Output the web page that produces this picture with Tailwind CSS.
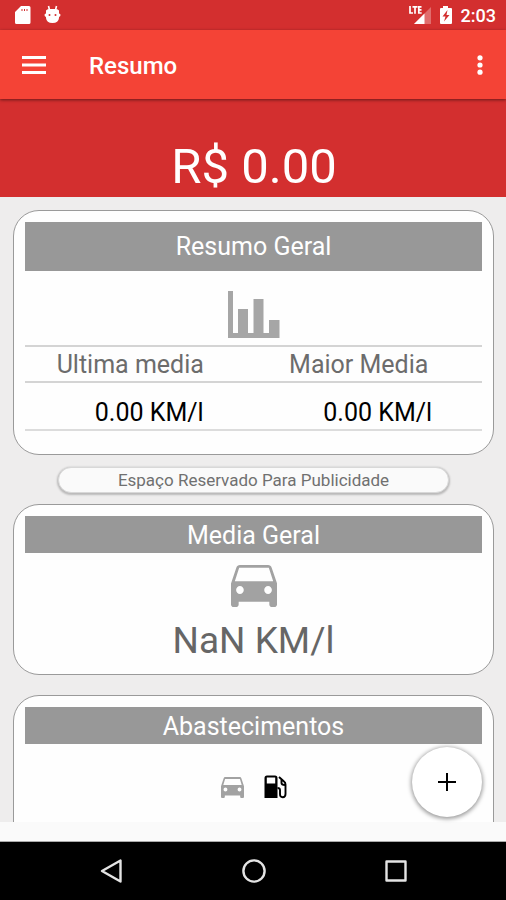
<!DOCTYPE html>
<html lang="pt-BR">
<head>
<meta charset="utf-8">
<meta name="viewport" content="width=device-width, initial-scale=1">
<title>Resumo</title>
<script src="https://cdn.jsdelivr.net/npm/@tailwindcss/browser@4"></script>
</head>
<body class="flex h-screen flex-col overflow-hidden bg-[#fafafa] font-[Roboto,sans-serif] text-black">

<!-- Status bar -->
<div class="flex h-[30px] shrink-0 items-center justify-between bg-[#d32f2f] pr-[10px] pl-[14px] text-white">
  <div class="flex items-center gap-[13px]">
    <svg class="h-5 w-[17px]" viewBox="0 0 17 20" fill="currentColor" aria-hidden="true"><path fill-rule="evenodd" d="M7 1h8a1.500 1.500 0 0 1 1.500 1.500v15a1.500 1.500 0 0 1-1.500 1.500H2.500A1.500 1.500 0 0 1 1 17.500V7zM7.500 4V6H8.500V4zM10 4V6h1V4zM12.500 4V6h1V4z"/></svg>
    <svg class="h-5 w-[17px]" viewBox="0 0 17 20" aria-hidden="true"><path d="M4.500 1l1 4M12.500 1l-1 4" stroke="currentColor" stroke-width="1.600"/><path fill="currentColor" fill-rule="evenodd" d="M2 5.500Q3 4 5 4h7q2 0 3 1.500v3q1.500 0 1.500 1.500T15 12v1q-.5 5-6.500 5T2 13v-1Q.5 11.500.5 10T2 8.500zM5.500 9a1 1 0 1 0 0 2 1 1 0 0 0 0-2zM11.500 9a1 1 0 1 0 0 2 1 1 0 0 0 0-2z"/></svg>
  </div>
  <div class="flex items-center">
    <svg class="mr-2 h-[22px] w-6" viewBox="0 0 24 22" aria-hidden="true"><path d="M24 3v17H7z" fill="#fff" fill-opacity=".3"/><path d="M17.500 9.500V20H7z" fill="#fff"/><path d="M3 2v7h3M5.500 2.800h5M8 2.800V9.800M14.500 2.800h-2.700V9h2.900M12 5.900h2.500" fill="none" stroke="#fff" stroke-width="1.700"/></svg>
    <svg class="mr-2 h-5 w-[14px]" viewBox="0 0 14 20" fill="currentColor" aria-hidden="true"><path fill-rule="evenodd" d="M4 1h5v2h3a1 1 0 0 1 1 1v14a1 1 0 0 1-1 1H2a1 1 0 0 1-1-1V4a1 1 0 0 1 1-1h2zM8.500 5L3.500 11.500H6.500L5 16.500l5.500-6.500H7.500z"/></svg>
    <span class="pt-px text-lg leading-5 font-medium">2:03</span>
  </div>
</div>

<!-- App bar -->
<header class="relative flex h-[69px] shrink-0 items-center bg-[#f44336] px-[14px] text-white shadow-[0_1px_3px_rgba(0,0,0,0.5)]">
  <button type="button" aria-label="Menu" class="flex size-10 items-center justify-center"><svg class="h-[18px] w-6" viewBox="0 0 24 18" fill="currentColor"><path d="M0 0h24v3H0zM0 7.500h24v3H0zM0 15h24v3H0z"/></svg></button>
  <h1 class="ml-[35px] grow pt-[2px] text-2xl font-medium">Resumo</h1>
  <button type="button" aria-label="Mais opções" class="flex h-10 w-6 items-center justify-center"><svg class="h-5 w-[6px]" viewBox="0 0 6 20" fill="currentColor"><circle cx="3" cy="2.800" r="2.600"/><circle cx="3" cy="10" r="2.600"/><circle cx="3" cy="17.200" r="2.600"/></svg></button>
</header>

<section class="flex h-[98px] shrink-0 items-end justify-center bg-[#d32f2f] pb-[2px] pl-[2px] text-[49px] leading-[56px] text-white">R$ 0.00</section>

<!-- Content -->
<main class="flex min-h-0 grow flex-col overflow-hidden bg-[#eeeded] pt-[13px] pr-3 pl-[13px] *:shrink-0">
  <section class="flex h-[245px] flex-col rounded-[26px] border border-[#9a9a9a] bg-[#fefefe] px-[11px] pt-[11px]">
    <h2 class="bg-[#989898] pt-px text-center text-[25px] leading-[48px] text-white">Resumo Geral</h2>
    <svg class="mt-5 mb-[6px] h-12 w-[54px] self-center" viewBox="0 0 54 48" fill="#a6a6a6" aria-hidden="true"><path d="M1 0h5v42h5V18h10v24h5.500V8h10v34H42V29h10.500v18H1z"/></svg>
    <table class="w-full table-fixed text-center">
      <thead>
        <tr class="border-y-2 border-[#d4d4d4] text-[25px] leading-[32px] text-[#6c6c6c]">
          <th scope="col" class="pt-[2px] pr-[18px] font-normal">Ultima media</th>
          <th scope="col" class="pt-[2px] pr-[18px] font-normal">Maior Media</th>
        </tr>
      </thead>
      <tbody>
        <tr class="border-b-2 border-[#dcdcdc] text-[25px] leading-[32px]">
          <td class="pt-[14px] pl-5">0.00 KM/l</td>
          <td class="pt-[14px] pl-5">0.00 KM/l</td>
        </tr>
      </tbody>
    </table>
  </section>

  <p class="mx-[45px] mt-3 rounded-full border border-[#d8d8d8] bg-[#fafafa] pt-px text-center text-[17px] leading-[23px] text-[#707070] shadow-[0_1px_2px_1px_rgba(0,0,0,0.22)]">Espaço Reservado Para Publicidade</p>

  <section class="mt-[11px] flex h-[171px] flex-col rounded-[26px] border border-[#9a9a9a] bg-[#fefefe] px-[11px] pt-[11px]">
    <h2 class="bg-[#989898] pt-[2px] text-center text-[25px] leading-[35px] text-white">Media Geral</h2>
    <svg class="mt-3 h-[42px] w-[46px] self-center" viewBox="3 5 18 16" preserveAspectRatio="none" fill="#a2a2a2" aria-hidden="true"><path d="M18.920 6.010C18.720 5.420 18.160 5 17.500 5h-11c-.66 0-1.210.42-1.420 1.010L3 12v8c0 .55.45 1 1 1h1c.55 0 1-.45 1-1v-1h12v1c0 .55.45 1 1 1h1c.55 0 1-.45 1-1v-8zM6.500 16c-.83 0-1.500-.67-1.500-1.500S5.670 13 6.500 13s1.500.67 1.500 1.500S7.330 16 6.500 16zm11 0c-.83 0-1.500-.67-1.500-1.500s.67-1.500 1.500-1.500 1.500.67 1.500 1.500-.67 1.500-1.500 1.500zM4.500 11.200l1.700-5.200h11.600l1.700 5.200z"/></svg>
    <p class="mt-[10px] text-center text-[37px] leading-[48px] text-[#666]">NaN KM/l</p>
  </section>

  <section class="mt-5 flex h-[200px] flex-col rounded-[26px] border border-[#9a9a9a] bg-[#fefefe] px-[11px] pt-[11px]">
    <h2 class="bg-[#989898] pt-[2px] text-center text-[25px] leading-[35px] text-white">Abastecimentos</h2>
    <div class="mt-[31px] flex h-6 items-center justify-center gap-5">
      <svg class="h-[21px] w-[23px]" viewBox="3 5 18 16" preserveAspectRatio="none" fill="#a2a2a2" aria-hidden="true"><path d="M18.920 6.010C18.720 5.420 18.160 5 17.500 5h-11c-.66 0-1.210.42-1.420 1.010L3 12v8c0 .55.45 1 1 1h1c.55 0 1-.45 1-1v-1h12v1c0 .55.45 1 1 1h1c.55 0 1-.45 1-1v-8zM6.500 16c-.83 0-1.500-.67-1.500-1.500S5.670 13 6.500 13s1.500.67 1.500 1.500S7.330 16 6.500 16zm11 0c-.83 0-1.500-.67-1.500-1.500s.67-1.500 1.500-1.500 1.500.67 1.500 1.500-.67 1.500-1.500 1.500zM4.800 11l1.400-4.500h11.600l1.400 4.500z"/></svg>
      <svg class="h-6 w-[23px]" viewBox="0 0 23 24" aria-hidden="true"><path fill-rule="evenodd" d="M3 .5h8A2.500 2.500 0 0 1 13.500 3v20H.5V3A2.500 2.500 0 0 1 3 .5zM2.800 2.500V8.500h8.400V2.500z"/><path d="M15 2l5 4.500q1.500 1 1.500 3V19q0 3.200-2.800 3.200T16 19v-4q0-2-2.500-2M17.500 4.500v3.500q0 2 3.500 2" fill="none" stroke="#000" stroke-width="1.900"/></svg>
    </div>
  </section>
</main>

<!-- Strip under the content; the floating button is anchored to it -->
<div class="relative h-5 shrink-0 border-b border-[#aaa] bg-[#fafafa]">
  <button type="button" aria-label="Adicionar" class="absolute right-6 bottom-6 flex size-[70px] items-center justify-center rounded-full bg-white shadow-[0_1px_4px_1px_rgba(0,0,0,0.4)]"><svg class="size-[18px]" viewBox="0 0 18 18" fill="none" stroke="#000" stroke-width="2"><path d="M9 0v18M0 9h18"/></svg></button>
</div>

<!-- Navigation bar -->
<nav class="flex h-[58px] shrink-0 items-center justify-center gap-[118px] bg-black pl-[2px] text-[#e4e4e4]">
  <button type="button" aria-label="Voltar" class="flex size-6 items-center justify-center"><svg class="size-6" viewBox="0 0 24 24" fill="none" stroke="currentColor" stroke-width="2.400" stroke-linejoin="round"><path d="M20.500 1.500v21L2 12z"/></svg></button>
  <button type="button" aria-label="Início" class="flex size-6 items-center justify-center"><svg class="size-6" viewBox="0 0 24 24" fill="none" stroke="currentColor" stroke-width="2.400"><circle cx="12" cy="12" r="10.600"/></svg></button>
  <button type="button" aria-label="Recentes" class="flex size-6 items-center justify-center"><svg class="size-6" viewBox="0 0 24 24" fill="none" stroke="currentColor" stroke-width="2.400" stroke-linejoin="round"><path d="M2.500 2.500h19v19h-19z"/></svg></button>
</nav>
</body>
</html>
